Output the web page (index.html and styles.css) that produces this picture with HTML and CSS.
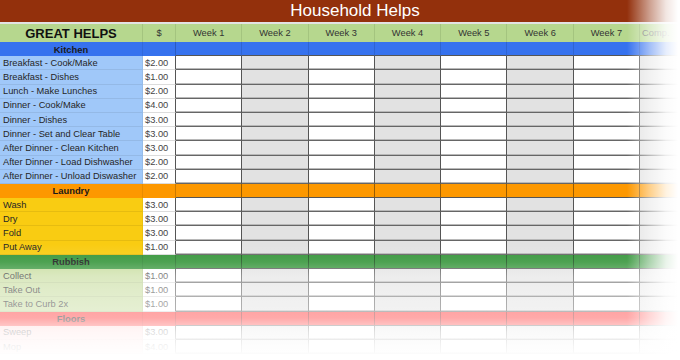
FILE: index.html
```html
<!DOCTYPE html>
<html>
<head>
<meta charset="utf-8">
<title>Household Helps</title>
<link rel="stylesheet" href="styles.css">
</head>
<body>
<div class="sheet">
  <div class="title">Household Helps</div>
  <div class="gap"></div>
  <div class="row head">
    <div class="c lab">GREAT HELPS</div><div class="c amt">$</div>
    <div class="c wk">Week 1</div><div class="c wk">Week 2</div><div class="c wk">Week 3</div><div class="c wk">Week 4</div><div class="c wk">Week 5</div><div class="c wk">Week 6</div><div class="c wk">Week 7</div><div class="c comp">Comp.</div>
  </div>

  <div class="row sec kitchen"><div class="c lab">Kitchen</div><div class="c amt"></div><div class="c wk"></div><div class="c wk"></div><div class="c wk"></div><div class="c wk"></div><div class="c wk"></div><div class="c wk"></div><div class="c wk"></div><div class="c wk"></div></div>
  <div class="row item kitchen"><div class="c lab">Breakfast - Cook/Make</div><div class="c amt">$2.00</div><div class="c wk"></div><div class="c wk alt"></div><div class="c wk"></div><div class="c wk alt"></div><div class="c wk"></div><div class="c wk alt"></div><div class="c wk"></div><div class="c wk alt"></div></div>
  <div class="row item kitchen"><div class="c lab">Breakfast - Dishes</div><div class="c amt">$1.00</div><div class="c wk"></div><div class="c wk alt"></div><div class="c wk"></div><div class="c wk alt"></div><div class="c wk"></div><div class="c wk alt"></div><div class="c wk"></div><div class="c wk alt"></div></div>
  <div class="row item kitchen"><div class="c lab">Lunch - Make Lunches</div><div class="c amt">$2.00</div><div class="c wk"></div><div class="c wk alt"></div><div class="c wk"></div><div class="c wk alt"></div><div class="c wk"></div><div class="c wk alt"></div><div class="c wk"></div><div class="c wk alt"></div></div>
  <div class="row item kitchen"><div class="c lab">Dinner - Cook/Make</div><div class="c amt">$4.00</div><div class="c wk"></div><div class="c wk alt"></div><div class="c wk"></div><div class="c wk alt"></div><div class="c wk"></div><div class="c wk alt"></div><div class="c wk"></div><div class="c wk alt"></div></div>
  <div class="row item kitchen"><div class="c lab">Dinner - Dishes</div><div class="c amt">$3.00</div><div class="c wk"></div><div class="c wk alt"></div><div class="c wk"></div><div class="c wk alt"></div><div class="c wk"></div><div class="c wk alt"></div><div class="c wk"></div><div class="c wk alt"></div></div>
  <div class="row item kitchen"><div class="c lab">Dinner - Set and Clear Table</div><div class="c amt">$3.00</div><div class="c wk"></div><div class="c wk alt"></div><div class="c wk"></div><div class="c wk alt"></div><div class="c wk"></div><div class="c wk alt"></div><div class="c wk"></div><div class="c wk alt"></div></div>
  <div class="row item kitchen"><div class="c lab">After Dinner - Clean Kitchen</div><div class="c amt">$3.00</div><div class="c wk"></div><div class="c wk alt"></div><div class="c wk"></div><div class="c wk alt"></div><div class="c wk"></div><div class="c wk alt"></div><div class="c wk"></div><div class="c wk alt"></div></div>
  <div class="row item kitchen"><div class="c lab">After Dinner - Load Dishwasher</div><div class="c amt">$2.00</div><div class="c wk"></div><div class="c wk alt"></div><div class="c wk"></div><div class="c wk alt"></div><div class="c wk"></div><div class="c wk alt"></div><div class="c wk"></div><div class="c wk alt"></div></div>
  <div class="row item kitchen"><div class="c lab">After Dinner - Unload Diswasher</div><div class="c amt">$2.00</div><div class="c wk"></div><div class="c wk alt"></div><div class="c wk"></div><div class="c wk alt"></div><div class="c wk"></div><div class="c wk alt"></div><div class="c wk"></div><div class="c wk alt"></div></div>

  <div class="row sec laundry"><div class="c lab">Laundry</div><div class="c amt"></div><div class="c wk"></div><div class="c wk"></div><div class="c wk"></div><div class="c wk"></div><div class="c wk"></div><div class="c wk"></div><div class="c wk"></div><div class="c wk"></div></div>
  <div class="row item laundry"><div class="c lab">Wash</div><div class="c amt">$3.00</div><div class="c wk"></div><div class="c wk alt"></div><div class="c wk"></div><div class="c wk alt"></div><div class="c wk"></div><div class="c wk alt"></div><div class="c wk"></div><div class="c wk alt"></div></div>
  <div class="row item laundry"><div class="c lab">Dry</div><div class="c amt">$3.00</div><div class="c wk"></div><div class="c wk alt"></div><div class="c wk"></div><div class="c wk alt"></div><div class="c wk"></div><div class="c wk alt"></div><div class="c wk"></div><div class="c wk alt"></div></div>
  <div class="row item laundry"><div class="c lab">Fold</div><div class="c amt">$3.00</div><div class="c wk"></div><div class="c wk alt"></div><div class="c wk"></div><div class="c wk alt"></div><div class="c wk"></div><div class="c wk alt"></div><div class="c wk"></div><div class="c wk alt"></div></div>
  <div class="row item laundry"><div class="c lab">Put Away</div><div class="c amt">$1.00</div><div class="c wk"></div><div class="c wk alt"></div><div class="c wk"></div><div class="c wk alt"></div><div class="c wk"></div><div class="c wk alt"></div><div class="c wk"></div><div class="c wk alt"></div></div>

  <div class="row sec rubbish"><div class="c lab">Rubbish</div><div class="c amt"></div><div class="c wk"></div><div class="c wk"></div><div class="c wk"></div><div class="c wk"></div><div class="c wk"></div><div class="c wk"></div><div class="c wk"></div><div class="c wk"></div></div>
  <div class="row item rubbish"><div class="c lab">Collect</div><div class="c amt">$1.00</div><div class="c wk"></div><div class="c wk alt"></div><div class="c wk"></div><div class="c wk alt"></div><div class="c wk"></div><div class="c wk alt"></div><div class="c wk"></div><div class="c wk alt"></div></div>
  <div class="row item rubbish"><div class="c lab">Take Out</div><div class="c amt">$1.00</div><div class="c wk"></div><div class="c wk alt"></div><div class="c wk"></div><div class="c wk alt"></div><div class="c wk"></div><div class="c wk alt"></div><div class="c wk"></div><div class="c wk alt"></div></div>
  <div class="row item rubbish"><div class="c lab">Take to Curb 2x</div><div class="c amt">$1.00</div><div class="c wk"></div><div class="c wk alt"></div><div class="c wk"></div><div class="c wk alt"></div><div class="c wk"></div><div class="c wk alt"></div><div class="c wk"></div><div class="c wk alt"></div></div>

  <div class="row sec floors"><div class="c lab">Floors</div><div class="c amt"></div><div class="c wk"></div><div class="c wk"></div><div class="c wk"></div><div class="c wk"></div><div class="c wk"></div><div class="c wk"></div><div class="c wk"></div><div class="c wk"></div></div>
  <div class="row item floors"><div class="c lab">Sweep</div><div class="c amt">$3.00</div><div class="c wk"></div><div class="c wk alt"></div><div class="c wk"></div><div class="c wk alt"></div><div class="c wk"></div><div class="c wk alt"></div><div class="c wk"></div><div class="c wk alt"></div></div>
  <div class="row item floors"><div class="c lab">Mop</div><div class="c amt">$4.00</div><div class="c wk"></div><div class="c wk alt"></div><div class="c wk"></div><div class="c wk alt"></div><div class="c wk"></div><div class="c wk alt"></div><div class="c wk"></div><div class="c wk alt"></div></div>
</div>
<div class="fade"></div>
</body>
</html>
```

FILE: styles.css
```css
html, body {
  margin: 0;
  padding: 0;
}
body {
  width: 680px;
  height: 360px;
  overflow: hidden;
  position: relative;
  background: #fff;
  font-family: "Liberation Sans", Arial, sans-serif;
}
.sheet {
  width: 710px;
}
.title {
  height: 22px;
  background: #93300c;
  color: #fff;
  font-size: 17px;
  line-height: 22px;
  text-align: center;
}
.gap {
  height: 2px;
  background: #e2e2e2;
}
.row {
  display: grid;
  grid-template-columns: 143px 33px repeat(7, 66.3px) 70px;
  height: 14.2px;
}
.c {
  box-sizing: border-box;
  height: 100%;
  display: flex;
  align-items: center;
  font-size: 9.3px;
  white-space: nowrap;
  overflow: hidden;
  color: #262626;
}

/* header */
.head {
  height: 18px;
  background: #b6d78e;
}
.head .c {
  justify-content: center;
  border-right: 1px solid #a4c47f;
  color: #333;
}
.head .lab {
  font-size: 13px;
  font-weight: bold;
  color: #111;
}
.head .comp {
  justify-content: flex-start;
  padding-left: 2px;
  color: #666;
}

/* section colours */
.kitchen { --dk: #3672ee; --lt: #a0c8f9; }
.laundry { --dk: #fd9800; --lt: #f9cc12; }
.rubbish { --dk: #35953a; --lt: #c6dc9c; }
.floors  { --dk: #ff3434; --lt: #ffd2d2; }

.sec .c {
  background: var(--dk);
}
.sec .lab {
  justify-content: center;
  font-weight: bold;
  font-size: 9.4px;
  color: #1a1a1a;
  border-right: 1px solid rgba(0, 0, 0, 0.08);
}
.sec .amt {
  border-right: 1px solid rgba(0, 0, 0, 0.2);
}
.sec .wk {
  border-right: 1px solid rgba(0, 0, 0, 0.4);
  border-bottom: 1px solid #555;
}
.kitchen.sec .wk {
  border-right-color: rgba(0, 0, 0, 0.12);
}

/* item rows */
.item .lab {
  background: var(--lt);
  padding-left: 3px;
  border-right: 1px solid rgba(0, 0, 0, 0.06);
  border-bottom: 1px solid rgba(0, 0, 0, 0.07);
}
.item .amt {
  background: #fff;
  padding-left: 2px;
  color: #444;
  border-bottom: 1px solid #dcdcdc;
  border-right: 1px solid #555;
}
.item .wk {
  background: #fff;
  border-right: 1px solid #555;
  border-bottom: 1px solid #666;
  box-shadow: inset 0 -1px 0 #b8b8b8;
}
.item .alt {
  background: #e2e2e2;
}

/* photo fade toward right and bottom edges */
.fade {
  position: absolute;
  left: 0;
  top: 0;
  width: 680px;
  height: 360px;
  pointer-events: none;
  background:
    linear-gradient(to right,
      rgba(255,255,255,0) 627px,
      rgba(255,255,255,0.55) 650px,
      rgba(255,255,255,0.88) 666px,
      #fff 678px),
    linear-gradient(to bottom,
      rgba(255,255,255,0) 244px,
      rgba(255,255,255,0.12) 262px,
      rgba(255,255,255,0.36) 276px,
      rgba(255,255,255,0.46) 290px,
      rgba(255,255,255,0.52) 304px,
      rgba(255,255,255,0.58) 318px,
      rgba(255,255,255,0.82) 332px,
      rgba(255,255,255,0.93) 346px,
      #fff 358px);
}
```
